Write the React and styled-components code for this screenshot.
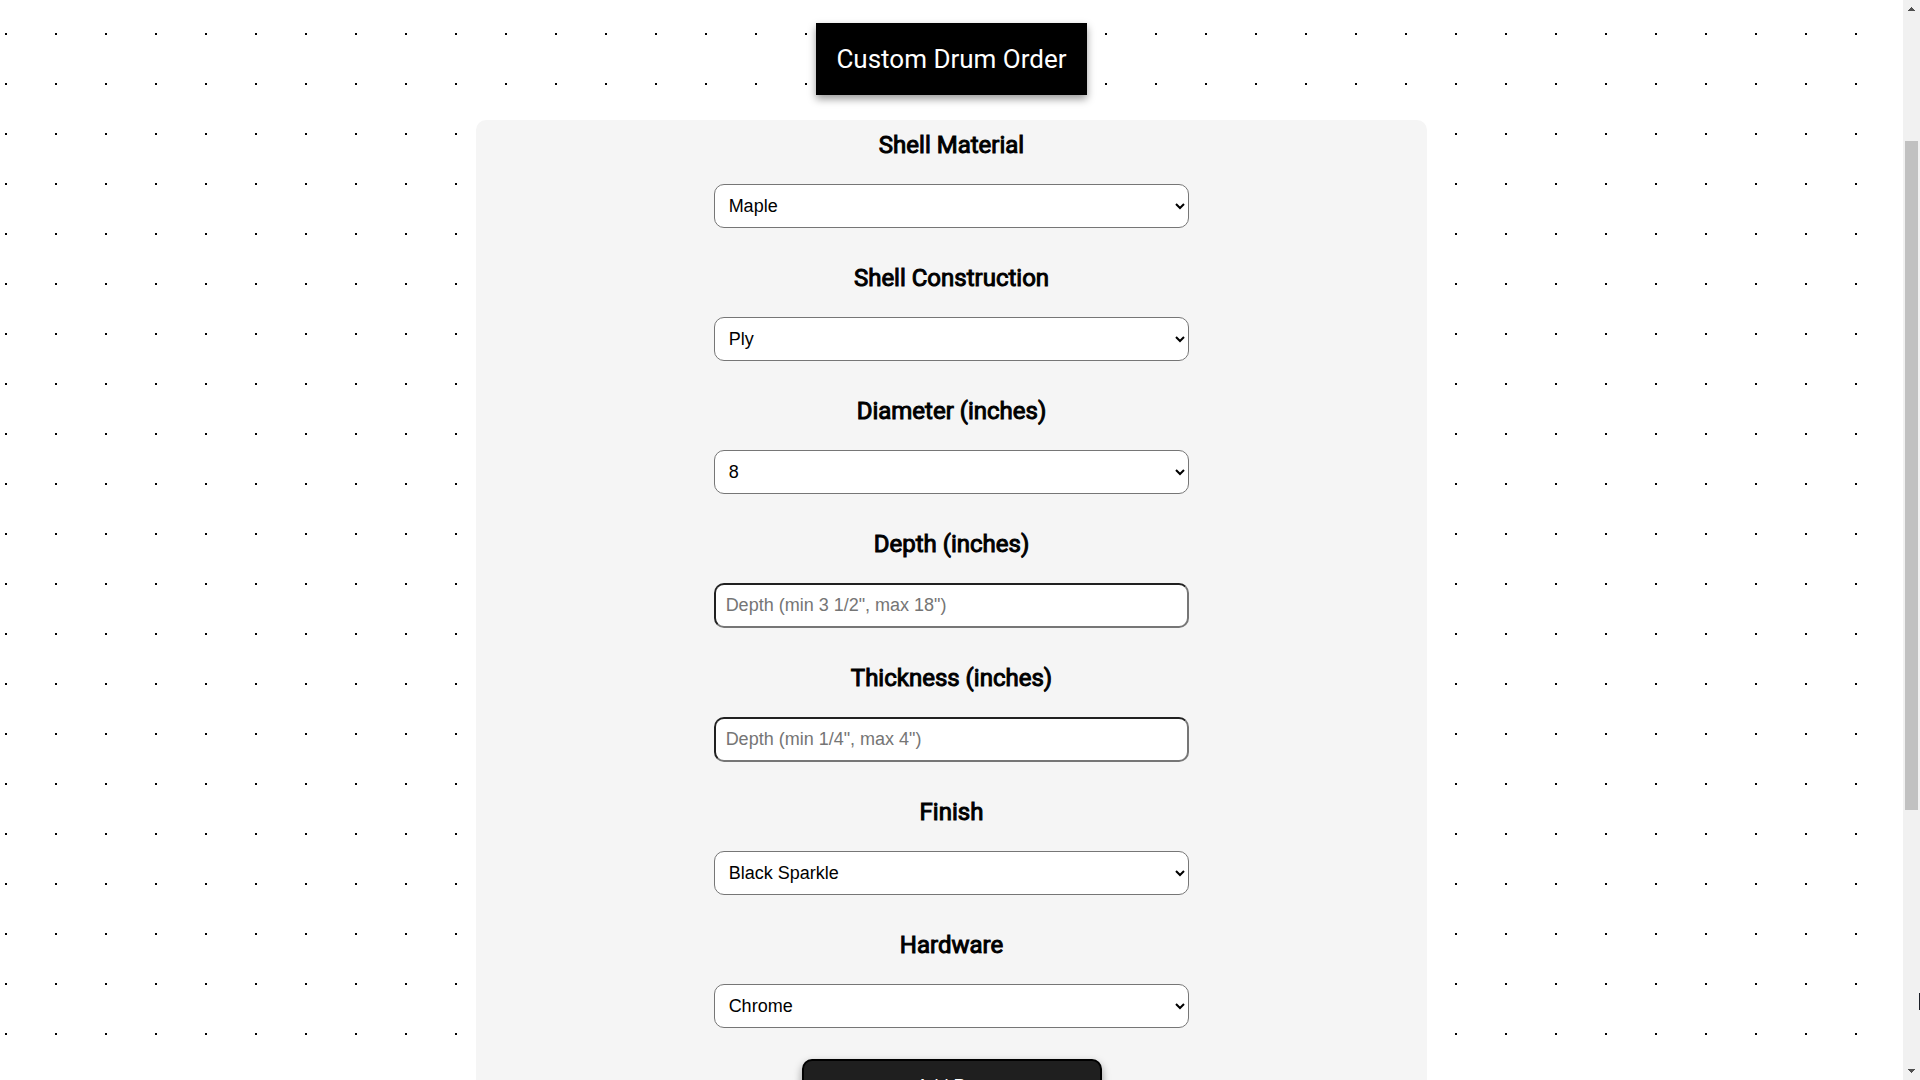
import React from "react";
import styled, { createGlobalStyle, css } from "styled-components";

const GlobalStyle = createGlobalStyle`
  *, *::before, *::after { box-sizing: border-box; }
  body { margin: 0; background: #fff; }
`;

const Viewport = styled.div`
  display: flex;
  height: 100vh;
  overflow: hidden;
  font-family: Roboto, "Liberation Sans", sans-serif;
`;

const Page = styled.main`
  flex: 1;
  min-width: 0;
  overflow: hidden;
  display: flex;
  flex-direction: column;
  align-items: center;
  padding-top: 23px;
  background-color: #fff;
  background-image: conic-gradient(from 90deg at 48px 48px, #000 25%, transparent 0);
  background-size: 50px 50px;
  background-position: 7px 35px;
`;

const Title = styled.h1`
  flex: none;
  margin: 0 0 25px;
  padding: 20px;
  background: #000;
  color: #fff;
  font-size: 26px;
  font-weight: 400;
  line-height: 32px;
  box-shadow: 0 4px 8px rgba(0, 0, 0, 0.4);
`;

const Form = styled.form`
  flex: none;
  width: 50%;
  display: flex;
  flex-direction: column;
  align-items: center;
  gap: 31px;
  padding: 10px 0 40px;
  background: #f5f5f5;
  border-radius: 10px;
`;

const Fields = styled.div`
  width: 50%;
  display: flex;
  flex-direction: column;
  gap: 35px;
`;

const Field = styled.div`
  display: flex;
  flex-direction: column;
  align-items: center;
  gap: 24px;
`;

const Label = styled.label`
  color: #000;
  font-size: 24px;
  line-height: 30px;
  -webkit-text-stroke: 1px #000;
`;

const control = css`
  width: 100%;
  margin: 0;
  background: #fff;
  border-radius: 10px;
  font-family: "Liberation Sans", Arial, sans-serif;
  font-size: 18px;
`;

const Select = styled.select`
  ${control}
  height: 44px;
  padding: 10px;
  border: 1px solid #767676;
  color: #000;
`;

const Input = styled.input`
  ${control}
  height: 45px;
  padding: 10px;
  border: 2px inset #767676;
  &::placeholder { color: #757575; }
`;

const SubmitButton = styled.button`
  width: 300px;
  padding: 15px;
  background: #1f1f1f;
  border: 2px solid #000;
  border-radius: 10px;
  color: #fff;
  font-family: "Liberation Sans", Arial, sans-serif;
  font-size: 18px;
  line-height: 20px;
  box-shadow: 0 4px 8px rgba(0, 0, 0, 0.4);
`;

const Scrollbar = styled.div`
  position: relative;
  flex: none;
  width: 17px;
  display: flex;
  flex-direction: column;
  background: #f1f1f1;
`;

const Arrow = styled.svg`
  display: block;
  flex: none;
  width: 17px;
  height: 17px;
  fill: #505050;
`;

const Track = styled.div`
  flex: ${(p) => p.$share} 0 0;
`;

const Thumb = styled(Track)`
  margin: 0 2px;
  background: #c1c1c1;
`;

const PointerEdge = styled.div`
  position: absolute;
  right: 0;
  bottom: 70px;
  width: 1px;
  height: 17px;
  background: #1b1f27;
`;

const fields = [
  { id: "material", label: "Shell Material", options: ["Maple"] },
  { id: "construction", label: "Shell Construction", options: ["Ply"] },
  { id: "diameter", label: "Diameter (inches)", options: ["8"] },
  { id: "depth", label: "Depth (inches)", placeholder: 'Depth (min 3 1/2", max 18")' },
  { id: "thickness", label: "Thickness (inches)", placeholder: 'Depth (min 1/4", max 4")' },
  { id: "finish", label: "Finish", options: ["Black Sparkle"] },
  { id: "hardware", label: "Hardware", options: ["Chrome"] },
];

export default function App() {
  return (
    <Viewport>
      <GlobalStyle />
      <Page>
        <Title>Custom Drum Order</Title>
        <Form>
          <Fields>
            {fields.map(({ id, label, options, placeholder }) => (
              <Field key={id}>
                <Label htmlFor={id}>{label}</Label>
                {options ? (
                  <Select id={id}>
                    {options.map((o) => <option key={o}>{o}</option>)}
                  </Select>
                ) : (
                  <Input id={id} type="text" placeholder={placeholder} />
                )}
              </Field>
            ))}
          </Fields>
          <SubmitButton type="button">Add Part</SubmitButton>
        </Form>
      </Page>
      <Scrollbar aria-hidden="true">
        <Arrow viewBox="0 0 17 17" shapeRendering="crispEdges"><path d="M5 11V10H6V9H7V8H8V7H9V8H10V9H11V10H12V11Z" /></Arrow>
        <Track $share={124} />
        <Thumb $share={669} />
        <Track $share={253} />
        <Arrow viewBox="0 0 17 17" shapeRendering="crispEdges"><path d="M5 6V7H6V8H7V9H8V10H9V9H10V8H11V7H12V6Z" /></Arrow>
        <PointerEdge />
      </Scrollbar>
    </Viewport>
  );
}
